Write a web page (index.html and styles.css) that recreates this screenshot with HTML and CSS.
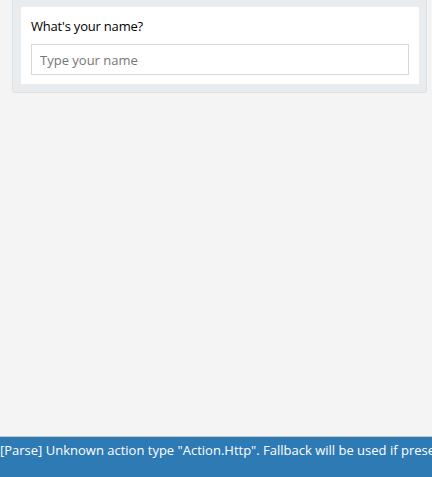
FILE: index.html
```html
<!DOCTYPE html>
<html>
<head>
<meta charset="utf-8">
<link rel="stylesheet" href="styles.css">
</head>
<body>
<div class="page">
  <div class="card">
    <div class="card-inner">
      <div class="label">What's your name?</div>
      <input class="text-input" type="text" placeholder="Type your name">
    </div>
  </div>
  <div class="status-bar">[Parse] Unknown action type "Action.Http". Fallback will be used if present.</div>
</div>
</body>
</html>
```
FILE: styles.css
```css
html, body {
  margin: 0;
  padding: 0;
}
body {
  background: #f4f4f4;
  font-family: "Open Sans", "Noto Sans", sans-serif;
}
.page {
  height: 100vh;
  display: flex;
  flex-direction: column;
}
.card {
  margin: 0 5px 0 12px;
  padding: 7px 7px 8px 8px;
  background: #e9ecef;
  border: 1px solid #dee2e6;
  border-top: none;
  border-radius: 0 0 3px 3px;
}
.card-inner {
  background: #ffffff;
  padding: 11px 10px 9px 10px;
  display: flex;
  flex-direction: column;
}
.label {
  font-size: 13px;
  line-height: 16px;
  color: #000;
  margin-bottom: 10px;
  letter-spacing: -0.2px;
}
.text-input {
  box-sizing: border-box;
  height: 31px;
  border: 1px solid #d9d9d9;
  padding: 0 8px;
  font-family: "Open Sans", "Noto Sans", sans-serif;
  font-size: 13px;
  color: #333;
  outline: none;
  margin: 0;
}
.text-input::placeholder {
  color: #767676;
}
.status-bar {
  margin-top: auto;
  background: #2e7ab5;
  border-top: 1px solid #c8c8c8;
  color: #ffffff;
  font-size: 13px;
  line-height: 18px;
  padding-top: 4px;
  box-sizing: border-box;
  height: 41px;
  white-space: nowrap;
  overflow: hidden;
  letter-spacing: 0;
}
```
